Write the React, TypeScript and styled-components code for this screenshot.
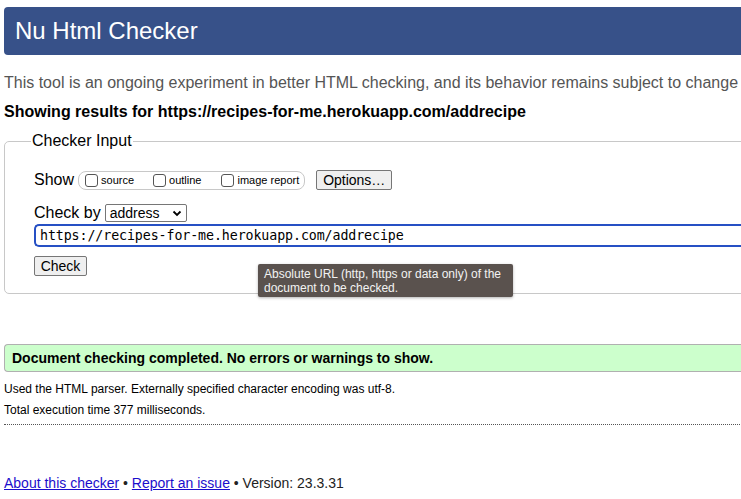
import styled, { createGlobalStyle } from "styled-components";

const GlobalStyle = createGlobalStyle`
  html, body {
    margin: 0;
    padding: 0;
    background: #fff;
    overflow: hidden;
  }
  body {
    font-family: "Liberation Sans", Arial, Helvetica, sans-serif;
    color: #000;
  }
`;

const Page = styled.div`
  width: 1000px;
  padding: 7px 0 0 4px;
`;

const Header = styled.h1`
  margin: 0;
  height: 48px;
  background: #375189;
  color: #fff;
  font-size: 24px;
  font-weight: normal;
  line-height: 48px;
  padding-left: 11px;
  border-radius: 4px 0 0 4px;
`;

const Intro = styled.p`
  margin: 18px 0 0;
  font-size: 16px;
  line-height: 20px;
  color: #555;
  white-space: nowrap;
`;

const Results = styled.h2`
  margin: 9px 0 0;
  font-size: 16px;
  line-height: 20px;
  font-weight: bold;
  white-space: nowrap;
`;

const Fieldset = styled.fieldset`
  position: relative;
  margin: 10px 0 0;
  padding: 19px 0 17px 29px;
  border: 1px solid #c8c8c8;
  border-radius: 5px;
`;

const Legend = styled.legend`
  font-size: 16px;
  padding: 0 1px;
  margin-left: -3px;
`;

const Row = styled.div`
  display: flex;
  align-items: center;
  font-size: 16px;
`;

const ShowRow = styled(Row)`
  height: 22px;
`;

const CheckRow = styled(Row)`
  margin-top: 12px;
  height: 20px;
`;

const Label = styled.span`
  margin-right: 3px;
`;

const Group = styled.div`
  display: flex;
  align-items: center;
  height: 19px;
  box-sizing: border-box;
  border: 1px solid #c8c8c8;
  border-radius: 8px;
  padding: 0 5px 0 6px;
  margin-left: 1px;
`;

const Option = styled.label`
  display: flex;
  align-items: center;
  font-size: 11px;
  margin-right: ${(p: { $gap?: number }) => p.$gap ?? 0}px;
`;

const Box = styled.span`
  width: 13px;
  height: 13px;
  border: 1px solid #555;
  border-radius: 3px;
  margin-right: 3px;
  box-sizing: border-box;
`;

const Button = styled.span`
  display: inline-flex;
  align-items: center;
  justify-content: center;
  height: 20px;
  box-sizing: border-box;
  padding: 0 7px;
  font-size: 14px;
  border: 1px solid #767676;
  border-radius: 2px;
  background: #efefef;
`;

const OptionsButton = styled(Button)`
  margin-left: 11px;
  width: 76px;
`;

const Select = styled.span`
  display: inline-flex;
  align-items: center;
  justify-content: space-between;
  width: 82px;
  height: 18px;
  box-sizing: border-box;
  border: 1px solid #767676;
  border-radius: 2px;
  padding: 0 4px 0 4px;
  font-size: 14px;
  margin-left: 1px;
`;

const UrlInput = styled.div`
  margin-top: 1px;
  height: 23px;
  box-sizing: border-box;
  border: 2px solid #2650c4;
  border-right: none;
  border-radius: 5px 0 0 5px;
  padding-left: 4px;
  font-family: "DejaVu Sans Mono", "Liberation Mono", monospace;
  font-size: 13.3px;
  line-height: 19px;
  letter-spacing: -0.1px;
  white-space: nowrap;
`;

const CheckButton = styled(Button)`
  margin-top: 9px;
  width: 53px;
`;

const Tooltip = styled.div`
  position: absolute;
  left: 253px;
  top: 114px;
  width: 255px;
  height: 33px;
  box-sizing: border-box;
  background: #5a524e;
  color: #f2f2f2;
  font-size: 12px;
  line-height: 14px;
  padding: 3px 6px;
  border-radius: 2px;
  white-space: nowrap;
  box-shadow: 0 1px 3px rgba(0, 0, 0, 0.3);
`;

const Success = styled.p`
  margin: 50px 0 0;
  height: 28px;
  box-sizing: border-box;
  background: #ccffcc;
  border: 1px solid #b0b0b0;
  border-right: none;
  border-radius: 4px 0 0 4px;
  padding-left: 7px;
  font-family: "Liberation Sans Narrow", "Liberation Sans", sans-serif;
  font-stretch: condensed;
  font-weight: bold;
  font-size: 14px;
  line-height: 26px;
`;

const Note = styled.p`
  margin: ${(p: { $top: number }) => p.$top}px 0 0;
  font-family: "Liberation Sans Narrow", "Liberation Sans", sans-serif;
  font-stretch: condensed;
  font-size: 12px;
  line-height: 15px;
`;

const Divider = styled.hr`
  margin: 6px 0 0;
  border: none;
  border-top: 1px dotted #555;
`;

const Footer = styled.p`
  margin: 49px 0 0;
  font-size: 14px;
  line-height: 18px;
  color: #222;
`;

const Link = styled.a`
  color: #1a0dcc;
  text-decoration: underline;
`;

export default function App() {
  return (
    <>
      <GlobalStyle />
      <Page>
        <Header>Nu Html Checker</Header>
        <Intro>
          This tool is an ongoing experiment in better HTML checking, and its
          behavior remains subject to change
        </Intro>
        <Results>
          Showing results for https://recipes-for-me.herokuapp.com/addrecipe
        </Results>
        <Fieldset>
          <Legend>Checker Input</Legend>
          <ShowRow>
            <Label>Show</Label>
            <Group>
              <Option $gap={19}>
                <Box />
                source
              </Option>
              <Option $gap={20}>
                <Box />
                outline
              </Option>
              <Option>
                <Box />
                image report
              </Option>
            </Group>
            <OptionsButton>Options…</OptionsButton>
          </ShowRow>
          <CheckRow>
            <Label>Check by</Label>
            <Select>
              address
              <svg width="10" height="7" viewBox="0 0 10 7">
                <path
                  d="M1.5 1.5 L5 5 L8.5 1.5"
                  fill="none"
                  stroke="#000"
                  strokeWidth="1.8"
                />
              </svg>
            </Select>
          </CheckRow>
          <UrlInput>https://recipes-for-me.herokuapp.com/addrecipe</UrlInput>
          <CheckButton>Check</CheckButton>
          <Tooltip>
            Absolute URL (http, https or data only) of the
            <br />
            document to be checked.
          </Tooltip>
        </Fieldset>
        <Success>Document checking completed. No errors or warnings to show.</Success>
        <Note $top={10}>
          Used the HTML parser. Externally specified character encoding was
          utf-8.
        </Note>
        <Note $top={6}>Total execution time 377 milliseconds.</Note>
        <Divider />
        <Footer>
          <Link>About this checker</Link> • <Link>Report an issue</Link> •
          Version: 23.3.31
        </Footer>
      </Page>
    </>
  );
}
